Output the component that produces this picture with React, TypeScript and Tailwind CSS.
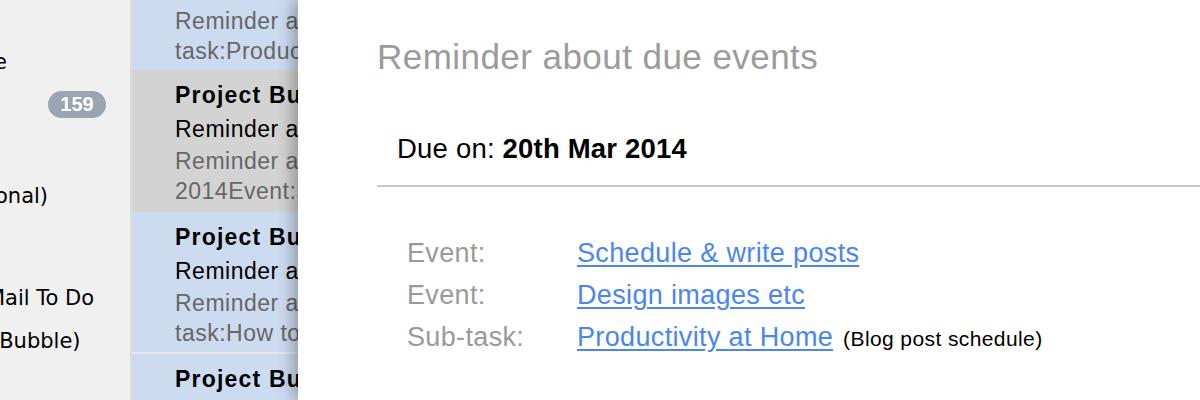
import React from "react";

const sans = "font-['Liberation_Sans',Arial,sans-serif]";
const lucida = "font-['DejaVu_Sans',sans-serif]";

type Msg = {
  title?: string;
  subject?: string;
  lines: string[];
  tone: "blue" | "gray";
  className?: string;
};

const MessageRow = ({ title, subject, lines, tone, className = "" }: Msg) => {
  return (
    <div
      className={`shrink-0 pt-[8px] pl-[43px] whitespace-nowrap text-[23px] tracking-[0.5px] ${
        tone === "blue" ? "bg-[#cddbf1]" : "bg-[#d3d3d3]"
      } ${className}`}
    >
      <div className="h-[34px] leading-[34px] font-bold tracking-[1.2px] text-black">{title}</div>
      <div className="h-[34px] leading-[34px] text-black">{subject}</div>
      {lines.map((l) => (
        <div key={l} className="h-[30px] leading-[30px] text-[#666666]">
          {l}
        </div>
      ))}
    </div>
  );
};

const EventRow = ({ label, link, note }: { label: string; link: string; note?: string }) => (
  <div className="flex items-baseline h-[42px] leading-[42px]">
    <span className="w-[170px] shrink-0 text-[#9a9a9a]">{label}</span>
    <a href="#" className="text-[#4a86f0] underline underline-offset-[3px]">
      {link}
    </a>
    {note && <span className="ml-[10px] text-[21px] tracking-[0.4px] text-black">{note}</span>}
  </div>
);

export default function App() {
  return (
    <div className={`flex h-[400px] w-[1200px] overflow-hidden bg-white ${sans}`}>
      {/* mailbox sidebar */}
      <div className={`w-[132px] shrink-0 overflow-hidden bg-[#f0f0f0] border-r-2 border-[#dddddd] text-[21px] text-black whitespace-nowrap ${lucida}`}>
        <div className="mt-[48px] h-[28px] leading-[28px] -ml-[6px]">e</div>
        <div className="mt-[15px] h-[28px] flex justify-end pr-[24px]">
          <span className={`w-[58px] h-[27px] rounded-full bg-[#9aa5b1] text-white font-bold text-[20px] leading-[27px] text-center ${sans}`}>
            159
          </span>
        </div>
        <div className="mt-[63px] h-[28px] leading-[28px] -ml-[5px]">onal)</div>
        <div className="mt-[74px] h-[28px] leading-[28px] -ml-[13px]">Mail To Do</div>
        <div className="mt-[15px] h-[28px] leading-[28px] -ml-[9px]">(Bubble)</div>
      </div>

      {/* message list */}
      <div className="w-[166px] shrink-0 flex flex-col overflow-hidden">
        <MessageRow
          tone="blue"
          className="-mt-[70px] h-[140px]"
          title="Project Bubble"
          subject="Reminder about due events"
          lines={["Reminder about due events Due on: 20th Mar 2014 Sub-", "task:Productivity at Home"]}
        />
        <MessageRow
          tone="gray"
          className="h-[142px]"
          title="Project Bubble"
          subject="Reminder about due events"
          lines={["Reminder about due events Due on: 20th Mar", "2014Event:Schedule & write posts"]}
        />
        <MessageRow
          tone="blue"
          className="h-[140px]"
          title="Project Bubble"
          subject="Reminder about due events"
          lines={["Reminder about due events Due on: 20th Mar 2014 Sub-", "task:How to plan a blog"]}
        />
        <div className="h-[2px] shrink-0 bg-[#e3e6eb]" />
        <MessageRow
          tone="blue"
          className="h-[140px]"
          title="Project Bubble"
          subject="Reminder about due events"
          lines={[]}
        />
      </div>

      {/* message view */}
      <div className="relative z-10 flex-1 bg-white pl-[79px] pt-[37px] shadow-[-6px_0_14px_rgba(0,0,0,0.28)]">
        <h1 className="text-[35px] leading-[40px] tracking-[0.45px] text-[#9b9b9b] font-normal whitespace-nowrap">
          Reminder about due events
        </h1>
        <div className="mt-[54px] pl-[20px] h-[36px] leading-[36px] text-[27.5px] tracking-[0.2px] text-black whitespace-nowrap">
          Due on: <b>20th Mar 2014</b>
        </div>
        <div className="mt-[18px] h-[2px] bg-[#c8c8c8]" />
        <div className="mt-[45px] pl-[30px] text-[27px] tracking-[0.35px] whitespace-nowrap">
          <EventRow label="Event:" link="Schedule & write posts" />
          <EventRow label="Event:" link="Design images etc" />
          <EventRow label="Sub-task:" link="Productivity at Home" note="(Blog post schedule)" />
        </div>
      </div>
    </div>
  );
}
